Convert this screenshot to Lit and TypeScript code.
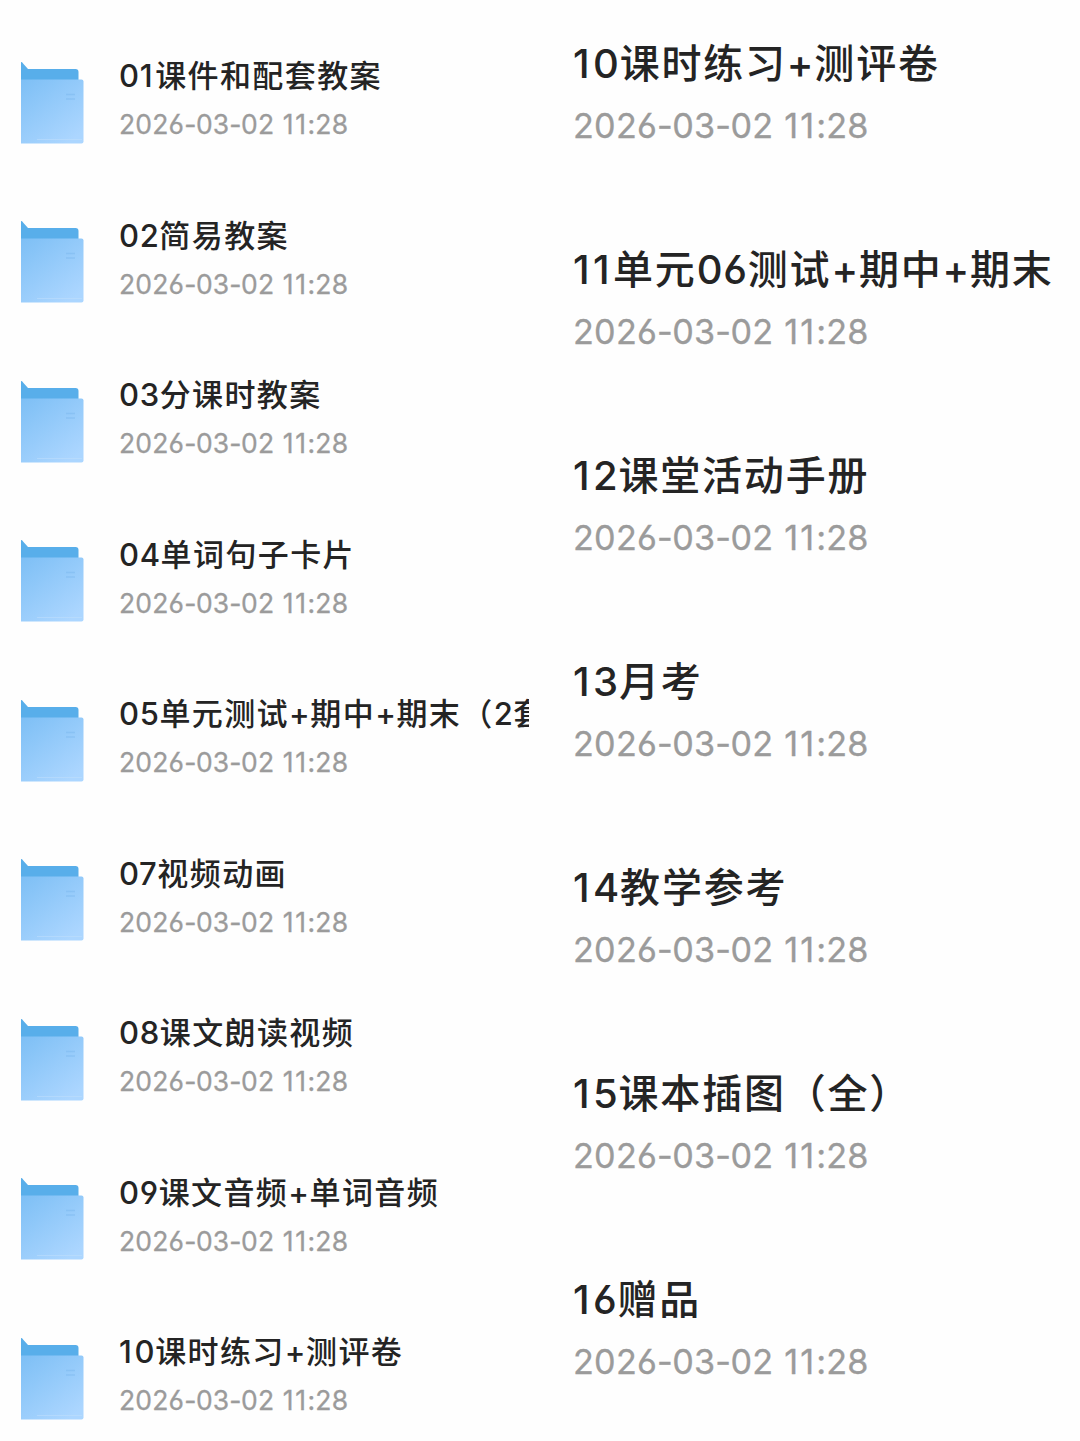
import { LitElement, html, svg, css } from "lit";
import { customElement, property } from "lit/decorators.js";

const STAMP = "2026-03-02 11:28";

const LEFT = [
  "01课件和配套教案",
  "02简易教案",
  "03分课时教案",
  "04单词句子卡片",
  "05单元测试+期中+期末（2套）",
  "07视频动画",
  "08课文朗读视频",
  "09课文音频+单词音频",
  "10课时练习+测评卷",
];

const RIGHT = [
  "10课时练习+测评卷",
  "11单元06测试+期中+期末",
  "12课堂活动手册",
  "13月考",
  "14教学参考",
  "15课本插图（全）",
  "16赠品",
];

/* Splits a string into runs that share one tracking value. */
const runs = (text: string) =>
  (text.match(/1+|[02-9]+|-|:| |\+|[^\d\-: +]+/g) ?? []).map((part) => {
    const kind = /^1/.test(part)
      ? "one"
      : /^\d/.test(part)
        ? "num"
        : part === "-"
          ? "dash"
          : part === ":"
            ? "colon"
            : part === " "
              ? "gap"
              : part === "+"
                ? "plus"
                : "han";
    return html`<span class=${kind}>${part}</span>`;
  });

@customElement("folder-icon")
class FolderIcon extends LitElement {
  static styles = css`
    :host { display: block; }
    svg { display: block; width: 64px; height: 84px; }
  `;
  render() {
    return html`<svg viewBox="0 0 64 84">
      ${svg`
        <defs>
          <linearGradient id="front" x1="0" y1="0" x2="0.75" y2="1">
            <stop offset="0" stop-color="#7dbff5" />
            <stop offset="1" stop-color="#acd6ff" />
          </linearGradient>
        </defs>
        <path d="M1 1 Q2 .5 3.5 3 L8 8 H55.5 Q58.5 8 58.5 11 V24 H1 Z" fill="#58aeea" />
        <path d="M1 18.5 H61.5 Q63.5 18.5 63.5 20.5 V80.5 Q63.5 82.5 61.5 82.5 H1 Z" fill="url(#front)" />
        <path d="M46 33.5 H55 M46 38 H55" stroke="#75b4ec" stroke-width="1.4" opacity=".4" />
        <path d="M17 78.5 H62" stroke="#c2e0fd" stroke-width="1" opacity=".5" />
      `}
    </svg>`;
  }
}

@customElement("file-entry")
class FileEntry extends LitElement {
  @property() name = "";
  static styles = css`
    :host { display: block; min-width: 0; overflow: hidden; white-space: nowrap; }
    .title, .date {
      height: var(--line);
      line-height: var(--line);
      font-family: Inter, "Noto Sans CJK SC", sans-serif;
      font-feature-settings: "cv03", "cv04";
    }
    .title { font-size: var(--title); font-weight: 500; color: #242424; }
    .date { font-size: var(--date); font-weight: 400; color: #9b9b9b; -webkit-text-stroke: 0.3px #9b9b9b; }
    .han { font-family: "Noto Sans CJK SC", sans-serif; letter-spacing: 0.045em; }
    .title .num { letter-spacing: 0.02em; }
    .title .one { letter-spacing: 0.085em; }
    .title .plus { letter-spacing: 0.02em; }
    .date .num { letter-spacing: 0.007em; }
    .date .one { letter-spacing: 0.06em; }
    .date .dash { letter-spacing: -0.02em; }
    .date .gap { letter-spacing: 0.04em; }
    .date .colon { letter-spacing: 0.005em; }
  `;
  render() {
    return html`
      <div class="title">${runs(this.name)}</div>
      <div class="date">${runs(STAMP)}</div>
    `;
  }
}

@customElement("app-root")
class AppRoot extends LitElement {
  static styles = css`
    :host { display: block; }
    .page {
      display: grid;
      grid-template-columns: 529px 507px;
      column-gap: 44px;
      height: 1441px;
      overflow: hidden;
      background: #fefefe;
    }
    .column { display: flex; flex-direction: column; }
    .left { padding-top: 48px; --line: 51px; --title: 31px; --date: 26.5px; }
    .right { padding-top: 30px; --line: 63.5px; --title: 40px; --date: 34.2px; }
    .row { flex: none; display: flex; align-items: flex-start; }
    .left .row { height: 159.5px; padding-left: 20px; gap: 35px; }
    .right .row { height: 206px; }
    folder-icon { flex: none; margin-top: 12.5px; }
    file-entry { flex: 1; }
  `;
  render() {
    return html`<div class="page">
      <div class="column left">
        ${LEFT.map((n) => html`<div class="row"><folder-icon></folder-icon><file-entry name=${n}></file-entry></div>`)}
      </div>
      <div class="column right">
        ${RIGHT.map((n) => html`<div class="row"><file-entry name=${n}></file-entry></div>`)}
      </div>
    </div>`;
  }
}
